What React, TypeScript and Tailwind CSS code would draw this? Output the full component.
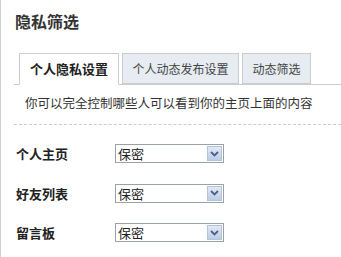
import React from "react";

const font = { fontFamily: '"Noto Sans CJK SC", "Liberation Sans", sans-serif' };

const tabs = [
  { label: "个人隐私设置", active: true, w: "w-[100px]" },
  { label: "个人动态发布设置", active: false, w: "w-[117px]" },
  { label: "动态筛选", active: false, w: "w-[69px]" },
];

const rows = ["个人主页", "好友列表", "留言板"];

const Select = () => (
  <div className="flex h-[19px] w-[109px] items-center border border-[#9aa1a8] bg-white">
    <span className="flex-1 pl-[2px] text-[13px] leading-none text-[#222]">保密</span>
    <span className="mr-px flex h-[15px] w-[15px] items-center justify-center border border-[#b4c4dc] bg-gradient-to-b from-[#e1e9f6] to-[#bccce6]">
      <svg width="9" height="6" viewBox="0 0 9 6">
        <path d="M1 1 L4.5 4.5 L8 1" fill="none" stroke="#4d6185" strokeWidth="1.8" />
      </svg>
    </span>
  </div>
);

export default function App() {
  return (
    <div className="h-[257px] w-[341px] overflow-hidden border-l border-[#cfcfcf] bg-white" style={font}>
      <h1 className="pl-[14px] pt-[11px] text-[16px] font-bold leading-[20px] text-[#333]">隐私筛选</h1>

      {/* Tabs */}
      <div className="ml-[13px] mt-[22px] flex h-[32px] items-end gap-[3px] border-b border-[#cccccc] pl-[5px]">
        {tabs.map((t) => (
          <div
            key={t.label}
            className={`${t.w} flex items-center justify-center border border-[#cccccc] ${
              t.active
                ? "-mb-px h-[32px] border-b-white bg-white text-[13px] font-bold text-[#222]"
                : "h-[31px] bg-[#e6ecf2] text-[12px] text-[#444]"
            }`}
          >
            {t.label}
          </div>
        ))}
      </div>

      <p className="pl-[24px] pt-[10px] text-[12.5px] leading-[16px] text-[#333]">
        你可以完全控制哪些人可以看到你的主页上面的内容
      </p>

      <div className="ml-[13px] mt-[13px] border-t border-dashed border-[#cccccc]" />

      <div className="flex flex-col gap-[20px] pl-[15px] pt-[19px]">
        {rows.map((r) => (
          <div key={r} className="flex items-center">
            <span className="w-[99px] text-[13px] font-bold text-[#222]">{r}</span>
            <Select />
          </div>
        ))}
      </div>
    </div>
  );
}
